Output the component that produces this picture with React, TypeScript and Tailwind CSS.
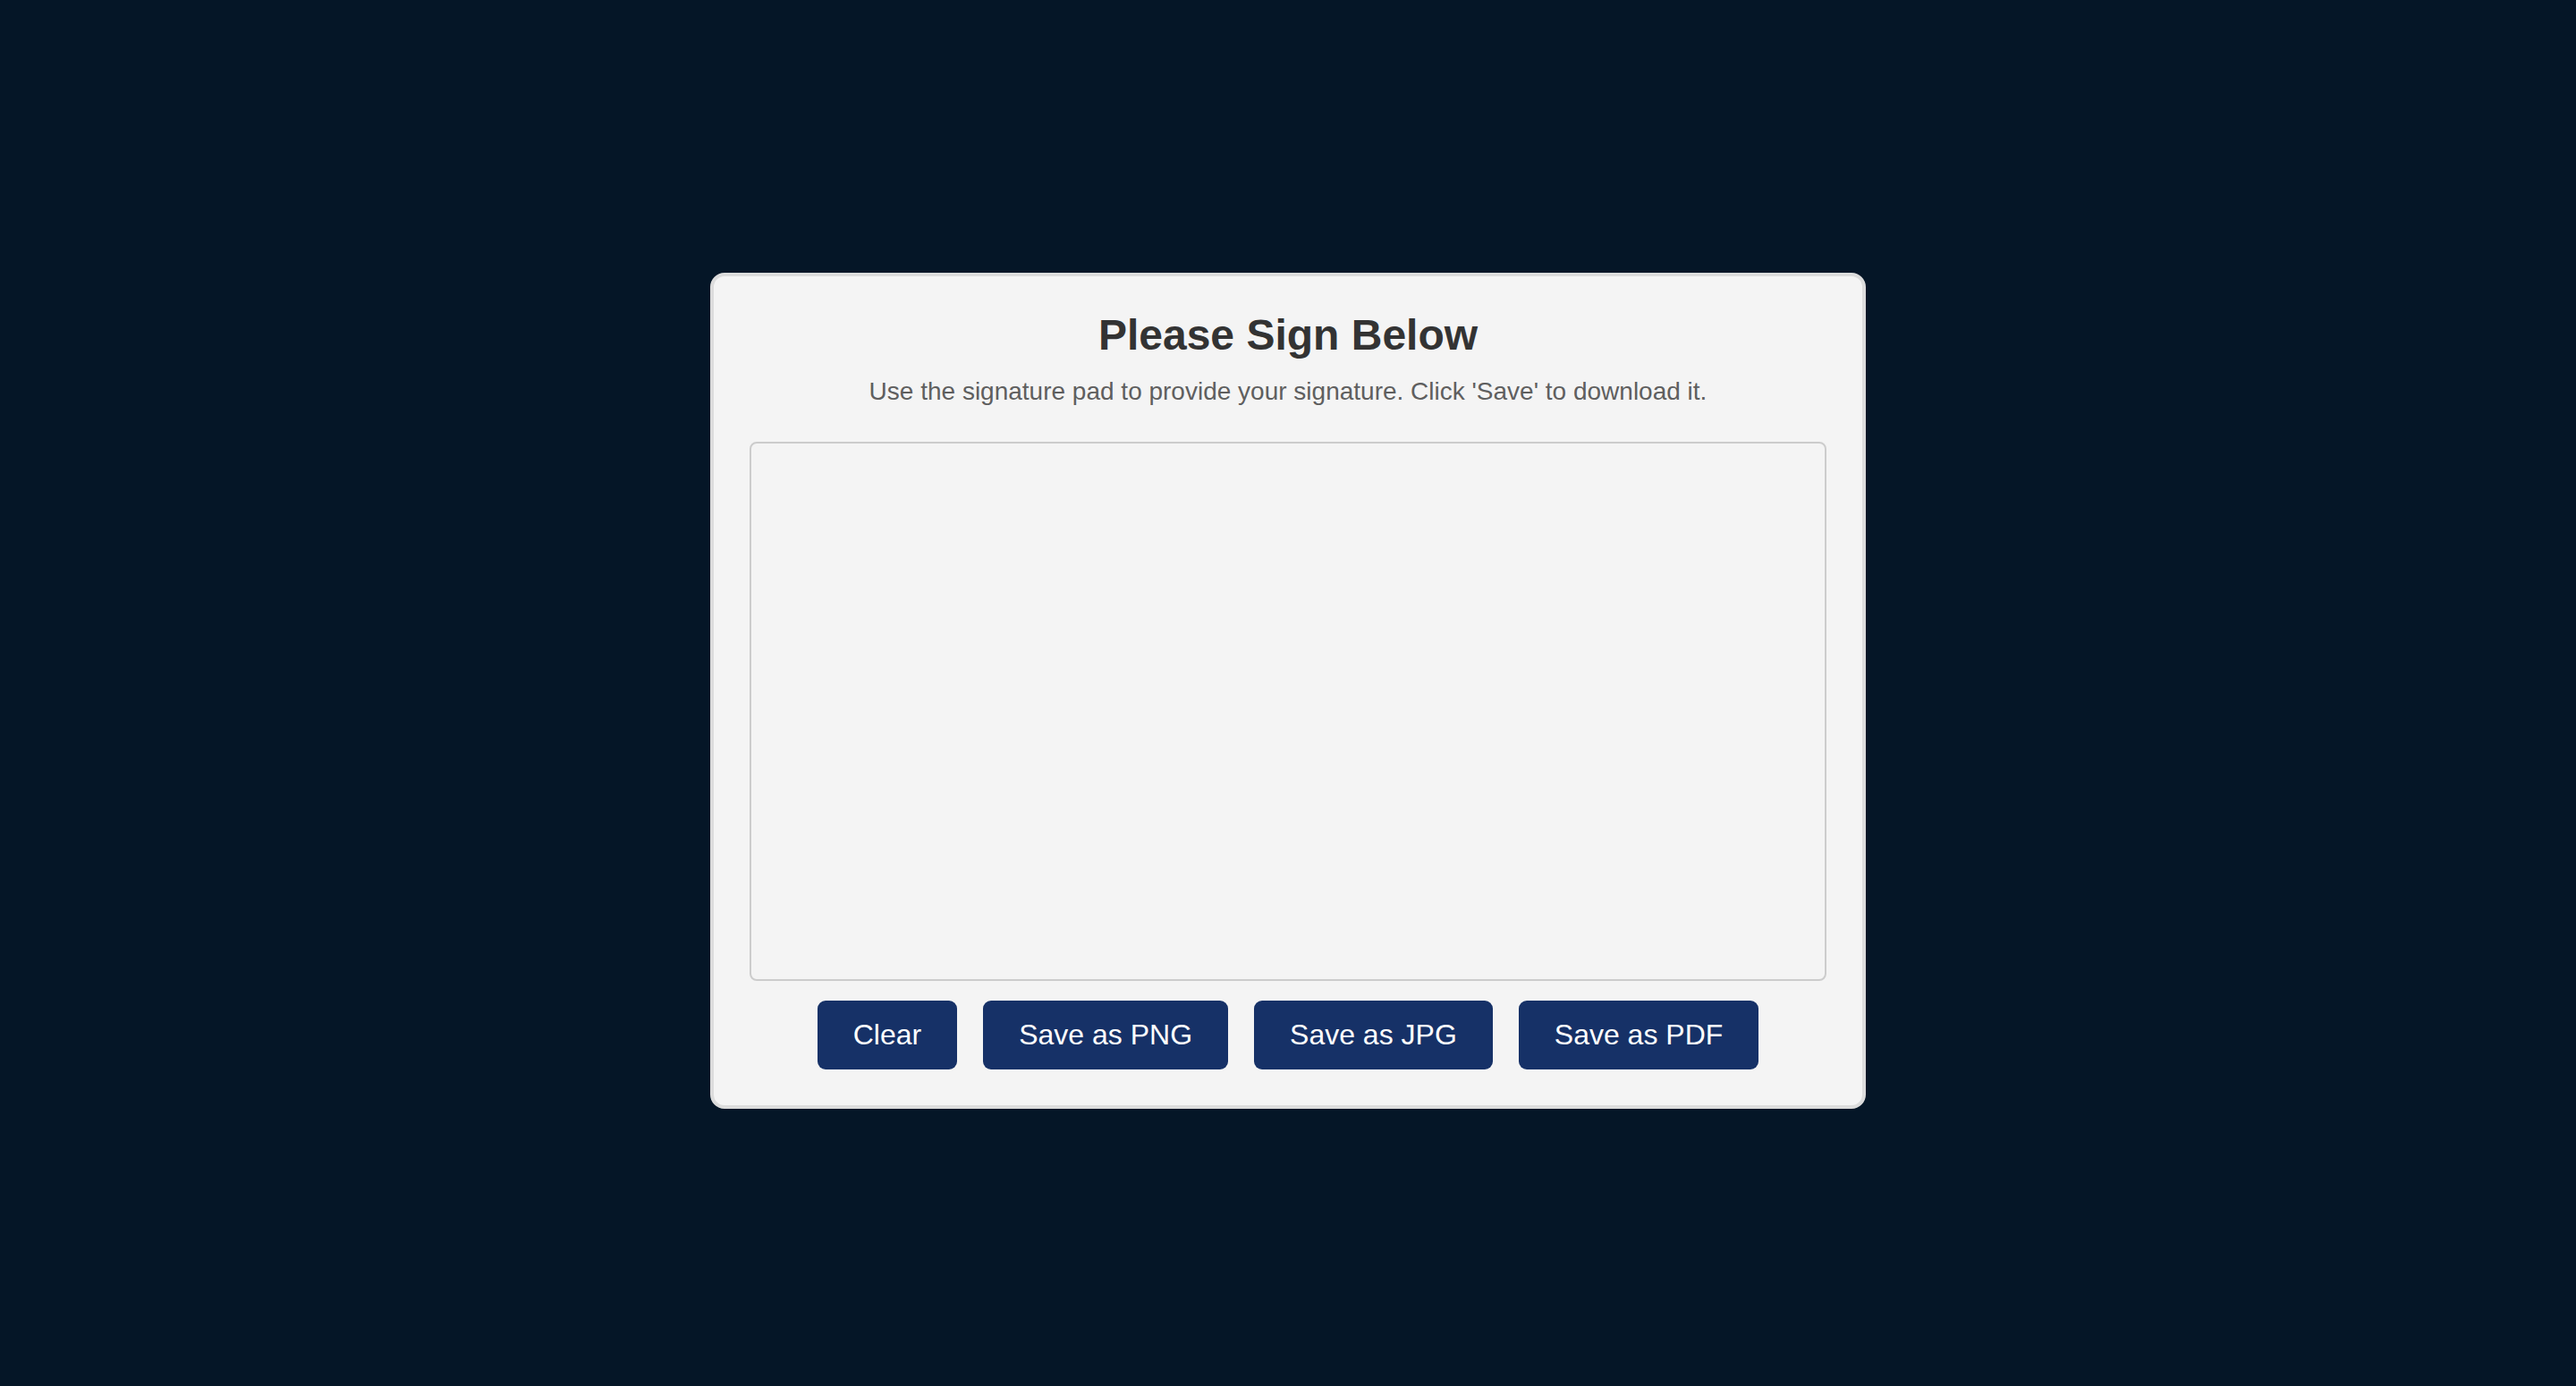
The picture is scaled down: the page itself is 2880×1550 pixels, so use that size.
const buttons = ["Clear", "Save as PNG", "Save as JPG", "Save as PDF"];

const App = () => {
  return (
    <div
      className="flex min-h-screen items-center justify-center bg-[#051627] pb-[5px]"
      style={{ fontFamily: '"Liberation Sans", Arial, sans-serif' }}
    >
      <div className="w-[1292px] rounded-[16px] border-[4px] border-[#dcdcdc] bg-[#f4f4f4] px-[40px] pb-[40px] pt-[38px]">
        <h2 className="text-center text-[48px] font-bold leading-[55px] text-[#333]">
          Please Sign Below
        </h2>
        <p className="mt-[20px] text-center text-[28px] leading-[32px] text-[#5f5f5f]">
          Use the signature pad to provide your signature. Click 'Save' to
          download it.
        </p>

        <div className="mt-[40px] h-[603px] w-full rounded-[8px] border-[2px] border-[#cccccc] bg-[#f4f4f4]" />

        <div className="mt-[22px] flex justify-center gap-[29px]">
          {buttons.map((label) => (
            <button
              key={label}
              className="rounded-[9px] bg-[#163167] px-[40px] py-[20px] text-[32px] leading-[37px] text-white"
            >
              {label}
            </button>
          ))}
        </div>
      </div>
    </div>
  );
};

export default App;
